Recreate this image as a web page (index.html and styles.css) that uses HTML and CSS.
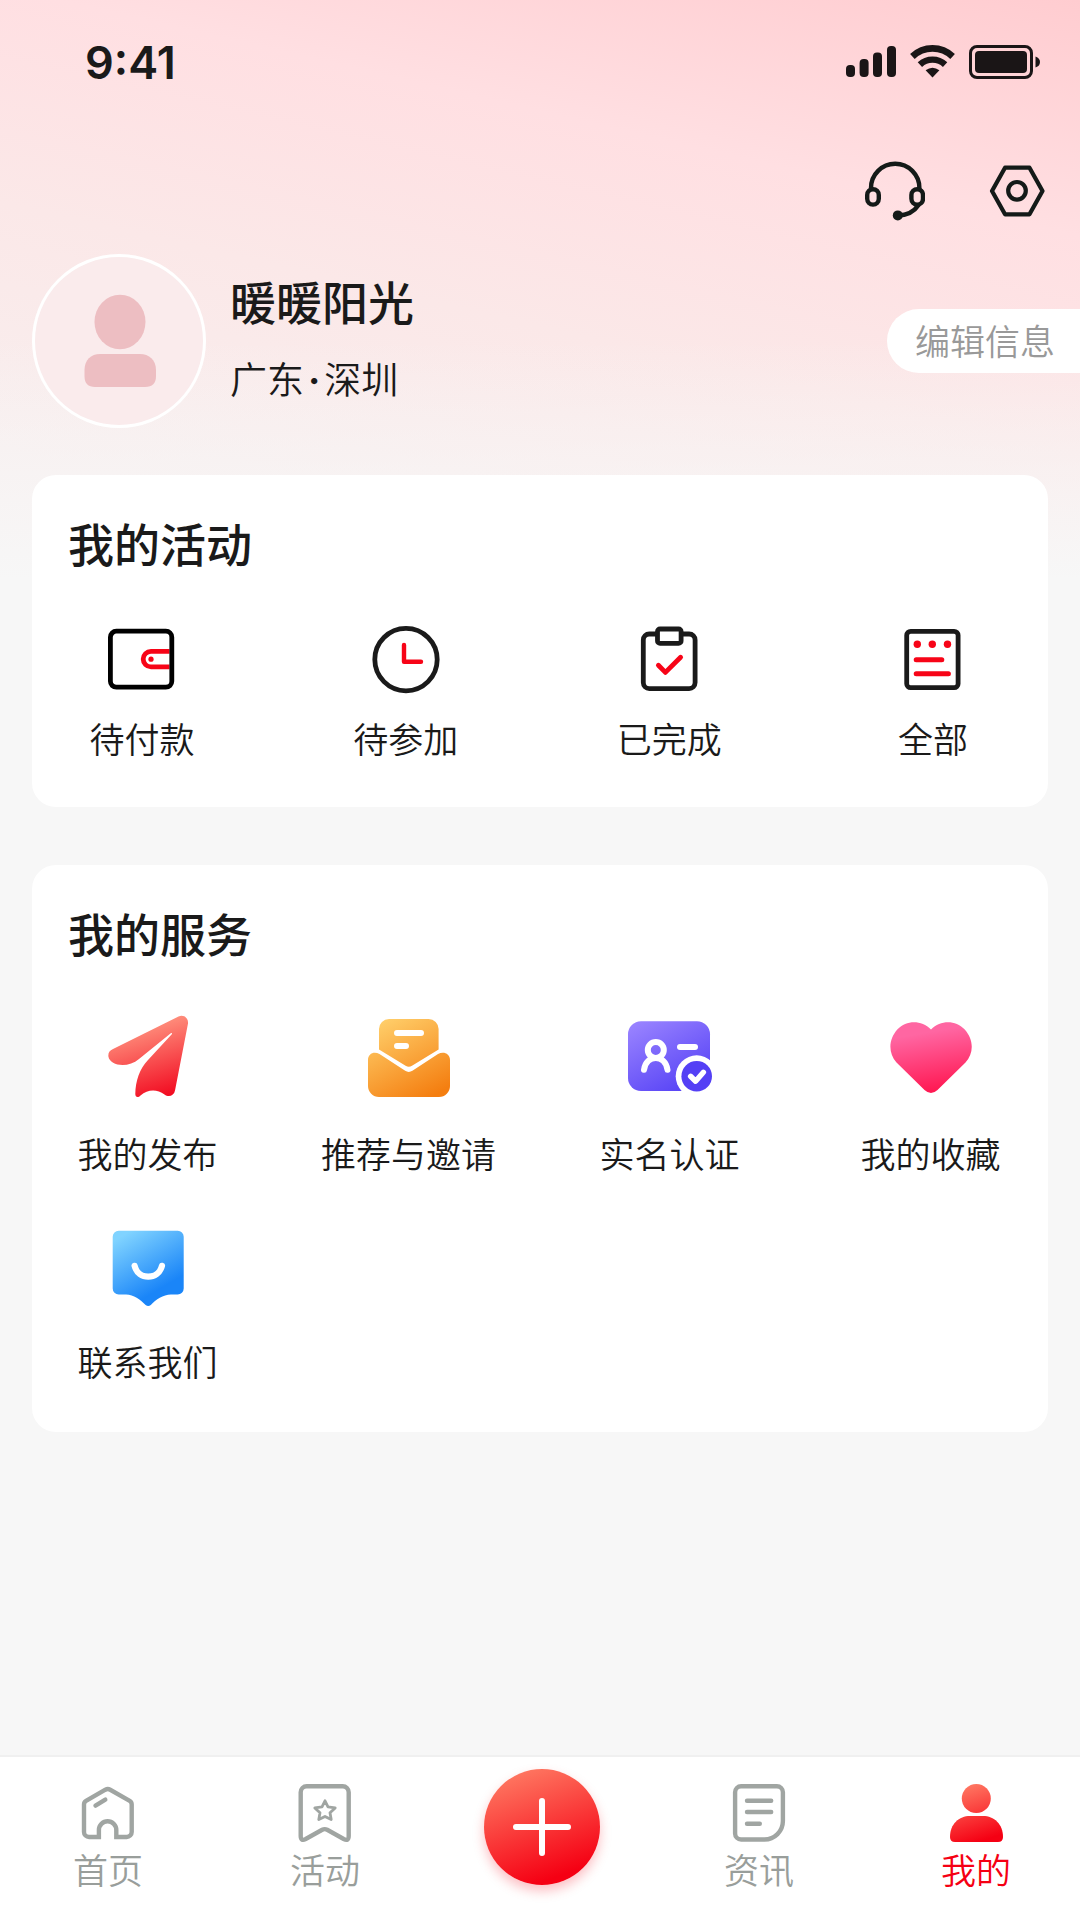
FILE: index.html
```html
<!DOCTYPE html>
<html lang="zh-CN">
<head>
<meta charset="UTF-8" />
<meta name="viewport" content="width=device-width, initial-scale=1" />
<title>我的</title>
<link rel="stylesheet" href="styles.css">
</head>
<body>
<header>
  <div class="status-bar">
    <span class="time">9:41</span>
    <div class="status-icons">
      <svg width="50" height="32" viewBox="0 0 50 32" fill="#1a1516">
        <rect x="0" y="19" width="9" height="12" rx="4"/>
        <rect x="13.6" y="13" width="9" height="18" rx="4"/>
        <rect x="27" y="6.6" width="9" height="24.4" rx="4"/>
        <rect x="41" y="0" width="9" height="31" rx="4"/>
      </svg>
      <svg width="45" height="34" viewBox="0 0 45 34">
        <path d="M2.4 11.5 A29 29 0 0 1 42.6 11.5" fill="none" stroke="#1a1516" stroke-width="6.6"/>
        <path d="M9.9 19.6 A18.5 18.5 0 0 1 35.1 19.6" fill="none" stroke="#1a1516" stroke-width="6.4"/>
        <path d="M15.6 25.3 Q22.5 20 29.4 25.3 L22.5 32.5Z" fill="#1a1516"/>
      </svg>
      <svg width="72" height="34" viewBox="0 0 72 34">
        <rect x="1.5" y="1.5" width="61" height="31" rx="6.5" fill="none" stroke="#1a1516" stroke-width="3"/>
        <rect x="6" y="6" width="52" height="22" rx="4" fill="#1a1516"/>
        <path d="M66.5 11.5 Q71 13 71 17 T66.5 22.5Z" fill="#1a1516"/>
      </svg>
    </div>
  </div>

  <div class="actions">
    <button type="button" aria-label="客服">
      <svg width="60" height="60" viewBox="0 0 60 60" fill="none" stroke="#141a18" stroke-width="4.4">
        <path d="M6 29 V27 a24.2 24.2 0 0 1 48.4 0 V29"/>
        <rect x="2.2" y="28.2" width="11.6" height="15.4" rx="5.8"/>
        <rect x="46.4" y="28.2" width="11.6" height="15.4" rx="5.8"/>
        <path d="M53.5 44 Q47 54 33 54.5"/>
        <circle cx="32.8" cy="54.4" r="5" fill="#141a18" stroke="none"/>
      </svg>
    </button>
    <button type="button" aria-label="设置">
      <svg width="60" height="60" viewBox="0 0 60 60" fill="none" stroke="#141a18" stroke-width="4.2" stroke-linejoin="round">
        <path d="M5 30 L18 6.7 H42.5 L55.5 30 L42.5 53.3 H18Z"/>
        <circle cx="30" cy="29.8" r="8.8"/>
      </svg>
    </button>
  </div>

  <div class="profile">
    <svg class="avatar" viewBox="0 0 168 168" role="img" aria-label="头像">
      <ellipse cx="85" cy="65" rx="25.5" ry="27.2" fill="#edbec2"/>
      <path d="M49.5 113 C49.5 103 56 97 65 97 H105 C114 97 121 103 121 113 V119 Q121 130 110 130 H60 Q49.5 130 49.5 119Z" fill="#edbec2"/>
    </svg>
    <div class="profile-info">
      <h1>暖暖阳光</h1>
      <p>广东<span class="dot">·</span>深圳</p>
    </div>
    <button type="button" class="edit-btn">编辑信息</button>
  </div>
</header>

<main>
  <section class="card">
    <h2>我的活动</h2>
    <div class="activities">
      <a href="#">
        <svg width="68" height="68" viewBox="0 0 68 68" fill="none">
          <path d="M61.5 25.3 H43 a7.8 7.8 0 0 0 0 15.6 H61.5" stroke="#f70417" stroke-width="4.8"/>
          <circle cx="43" cy="33.2" r="2.6" fill="#f70417"/>
          <rect x="2.4" y="5.2" width="61.4" height="56" rx="6" stroke="#000" stroke-width="4.8"/>
        </svg>
        <span>待付款</span>
      </a>
      <a href="#">
        <svg width="68" height="68" viewBox="0 0 68 68" fill="none">
          <circle cx="34" cy="33.6" r="31.2" stroke="#1a1a1a" stroke-width="4.8"/>
          <path d="M32 19 V35.7 H49" stroke="#f70417" stroke-width="4.4" stroke-linecap="round" stroke-linejoin="round"/>
        </svg>
        <span>待参加</span>
      </a>
      <a href="#">
        <svg width="68" height="68" viewBox="0 0 68 68" fill="none" stroke="#1a1a1a" stroke-width="4.8">
          <rect x="8.3" y="8" width="51.8" height="54.6" rx="6"/>
          <rect x="22.5" y="3" width="23.6" height="14.4" rx="2.5" fill="#fff"/>
          <path d="M23.4 39.3 L30.4 46.4 L45.6 31.2" stroke="#f70417" stroke-linecap="round" stroke-linejoin="round"/>
        </svg>
        <span>已完成</span>
      </a>
      <a href="#">
        <svg width="68" height="68" viewBox="0 0 68 68" fill="none">
          <rect x="7.7" y="5.3" width="51.4" height="56.4" rx="4" stroke="#1a1a1a" stroke-width="4.8"/>
          <g fill="#f70417">
            <circle cx="18.3" cy="18.3" r="3.7"/>
            <circle cx="33.3" cy="18.3" r="3.7"/>
            <circle cx="48.5" cy="18.3" r="3.7"/>
          </g>
          <path d="M17.2 33.7 H42.8 M17.2 47.7 H49.4" stroke="#f70417" stroke-width="5" stroke-linecap="round"/>
        </svg>
        <span>全部</span>
      </a>
    </div>
  </section>

  <section class="card">
    <h2>我的服务</h2>
    <div class="services">
      <a href="#">
        <svg width="84" height="84" viewBox="0 0 84 84">
          <defs>
            <linearGradient id="plane" x1="0.35" y1="0" x2="0.65" y2="1">
              <stop offset="0.1" stop-color="#ff9480"/>
              <stop offset="1" stop-color="#f20d22"/>
            </linearGradient>
          </defs>
          <path fill="url(#plane)" d="M72.5 2.4 C77.5 0 82.7 4 82 9.5 L69 76.5 C68 82 62.5 83.5 58.5 80.5 C51 75 42 75 34.5 81.5 C32 84 29.3 83.3 29.3 80 C29.5 67 33.5 55 42 46 L66 20 C66.2 19.2 65.5 18.8 64.8 19.3 L33 45 C22 54.5 4 52 2.4 42.5 C2 39 3.5 36.5 7 35Z"/>
        </svg>
        <span>我的发布</span>
      </a>
      <a href="#">
        <svg width="84" height="84" viewBox="0 0 84 84">
          <defs>
            <linearGradient id="mail" gradientUnits="userSpaceOnUse" x1="20" y1="5" x2="62" y2="84">
              <stop offset="0" stop-color="#ffcd68"/>
              <stop offset="1" stop-color="#f47e10"/>
            </linearGradient>
          </defs>
          <path fill="url(#mail)" d="M22 5 H61.6 a10 10 0 0 1 10 10 V35.5 L45 51.8 q-3.2 2 -6.4 0 L12 35.5 V15 a10 10 0 0 1 10 -10Z"/>
          <path fill="url(#mail)" d="M1 46 C1 39.5 7 37 12.5 40 L38.2 56.8 q3.6 2.2 7.2 0 L71 40 C76.5 37 83 39.5 83 46 V72 a11 11 0 0 1 -11 11 H12 a11 11 0 0 1 -11 -11Z"/>
          <path d="M30 19 H54 M30 32 H39" fill="none" stroke="#fff" stroke-width="6" stroke-linecap="round"/>
        </svg>
        <span>推荐与邀请</span>
      </a>
      <a href="#">
        <svg width="84" height="84" viewBox="0 0 84 84" fill="none" stroke-linecap="round" stroke-linejoin="round">
          <defs>
            <linearGradient id="idcard" x1="0.15" y1="0" x2="0.8" y2="1">
              <stop offset="0" stop-color="#9882ff"/>
              <stop offset="1" stop-color="#5440f5"/>
            </linearGradient>
          </defs>
          <rect x="0" y="7.3" width="82" height="69.7" rx="13" fill="url(#idcard)"/>
          <circle cx="27.8" cy="36" r="8" stroke="#fff" stroke-width="6"/>
          <path d="M16 55.8 C18 40 37.5 40 39.5 55.8" stroke="#fff" stroke-width="6"/>
          <path d="M52 33 H67" stroke="#fff" stroke-width="6"/>
          <circle cx="68.7" cy="62.3" r="21" fill="#fff"/>
          <circle cx="68.7" cy="62.3" r="15.3" fill="#5440f5"/>
          <path d="M62.6 62.3 L67.6 67.2 L75.4 58.3" stroke="#fff" stroke-width="5.4"/>
        </svg>
        <span>实名认证</span>
      </a>
      <a href="#">
        <svg width="84" height="84" viewBox="0 0 84 84">
          <defs>
            <linearGradient id="heart" x1="0.4" y1="0" x2="0.6" y2="1">
              <stop offset="0.15" stop-color="#ff66a2"/>
              <stop offset="1" stop-color="#ff154f"/>
            </linearGradient>
          </defs>
          <path fill="url(#heart)" d="M42 15.4 C32.5 5.8 17.5 5.8 8.5 15.2 C-.8 25.5 -.8 39.5 7.5 48.5 L35.5 76 q6.5 6 13 0 L76.5 48.5 C85 39.5 85 25.5 75.5 15.2 C66.5 5.8 51.5 5.8 42 15.4Z"/>
        </svg>
        <span>我的收藏</span>
      </a>
      <a href="#">
        <svg width="84" height="84" viewBox="0 0 84 84">
          <defs>
            <linearGradient id="contact" x1="0.15" y1="0" x2="0.65" y2="0.9">
              <stop offset="0.05" stop-color="#80d3ff"/>
              <stop offset="0.9" stop-color="#1a85f8"/>
            </linearGradient>
          </defs>
          <path fill="url(#contact)" d="M12.7 8.7 H71.7 a6 6 0 0 1 6 6 V66.5 a6 6 0 0 1 -6 6 H65 C57 72.7 50 77.5 44.8 83 q-2.6 2 -5.2 0 C34 77.5 28 72.7 20 72.5 H12.7 a6 6 0 0 1 -6 -6 V14.7 a6 6 0 0 1 6 -6Z"/>
          <path d="M28.6 43.8 C32 58.2 52.4 58.2 56 43.8" fill="none" stroke="#fff" stroke-width="6.2" stroke-linecap="round"/>
        </svg>
        <span>联系我们</span>
      </a>
    </div>
  </section>
</main>

<nav>
  <a href="#">
    <svg width="60" height="60" viewBox="0 0 60 60" fill="none" stroke="#a0a5a2" stroke-width="4.4">
      <path d="M20.9 53 H11 a5 5 0 0 1 -5 -5 V20.5 q0 -2.5 2 -3.7 L27.4 5.7 q2.4 -1.3 4.8 0 L51.7 16.8 q2 1.2 2 3.7 V48 a5 5 0 0 1 -5 5 H38.3 V46 a8.7 8.7 0 0 0 -17.4 0Z"/>
      <path d="M17.5 21.6 L27.3 15.6" stroke-linecap="round"/>
    </svg>
    <span>首页</span>
  </a>
  <a href="#">
    <svg width="60" height="60" viewBox="0 0 60 60" fill="none" stroke="#a0a5a2" stroke-width="4.4">
      <path d="M11.7 2.2 H47.7 a6 6 0 0 1 6 6 V52 q0 5.5 -5 3 L32.2 45.8 q-2.5 -1.3 -5 0 L10.7 55 q-5 2.5 -5 -3 V8.2 a6 6 0 0 1 6 -6Z"/>
      <path d="M30 16.8 L33 22.9 L40.2 23.9 L35 28.8 L36.2 35.6 L30 32.4 L23.8 35.6 L25 28.8 L19.8 23.9 L27 22.9Z" stroke-width="2.8" stroke-linejoin="round"/>
    </svg>
    <span>活动</span>
  </a>
  <button type="button" class="add-btn" aria-label="发布">
    <svg width="60" height="60" viewBox="0 0 60 60" fill="none" stroke="#fff" stroke-width="6" stroke-linecap="round">
      <path d="M4 30 H56 M30 4 V56"/>
    </svg>
  </button>
  <a href="#">
    <svg width="60" height="60" viewBox="0 0 60 60" fill="none" stroke="#a0a5a2" stroke-width="4.4" stroke-linecap="round">
      <path d="M12.1 2.2 H47.9 a6 6 0 0 1 6 6 V37 a18.5 18.5 0 0 1 -18.5 18.5 H12.1 a6 6 0 0 1 -6 -6 V8.2 a6 6 0 0 1 6 -6Z"/>
      <path d="M18 16.7 H42.2 M18 28 H42.2 M18 39.7 H30.8"/>
    </svg>
    <span>资讯</span>
  </a>
  <a href="#" class="active">
    <svg width="60" height="60" viewBox="0 0 60 60">
      <defs>
        <linearGradient id="mine" gradientUnits="userSpaceOnUse" x1="20" y1="0" x2="38" y2="56">
          <stop offset="0" stop-color="#ff7a64"/>
          <stop offset="1" stop-color="#f50013"/>
        </linearGradient>
      </defs>
      <circle cx="30.3" cy="14.5" r="14.5" fill="url(#mine)"/>
      <path fill="url(#mine)" d="M4 53 C4 40 13 32 24 32 H37 C48 32 57 40 57 53 q0 5 -5 5 H9 q-5 0 -5 -5Z"/>
    </svg>
    <span>我的</span>
  </a>
</nav>
</body>
</html>
```
FILE: styles.css
```css
* {
  box-sizing: border-box;
}
body {
  margin: 0;
  min-height: 100vh;
  display: flex;
  flex-direction: column;
  background-color: #f7f7f7;
  background-image:
    linear-gradient(180deg, rgba(247, 247, 247, 0) 340px, #f7f7f7 580px),
    linear-gradient(193deg, #ffccd0 0, #ffdfe2 230px, #fbe8e8 440px, #f8eeee 680px);
  background-size: 100% 580px;
  background-repeat: no-repeat;
  font-family: "Noto Sans CJK SC", sans-serif;
  color: #1a1a1a;
}
h1, h2, p {
  margin: 0;
}
a {
  color: inherit;
  text-decoration: none;
}
button {
  border: none;
  padding: 0;
  background: none;
  font-family: inherit;
  cursor: pointer;
}
svg {
  display: block;
  flex-shrink: 0;
}

/* Header */
.status-bar {
  height: 124px;
  padding: 0 39px 0 85px;
  display: flex;
  align-items: center;
  justify-content: space-between;
}
.time {
  font-family: Inter, sans-serif;
  font-size: 45px;
  font-weight: 600;
}
.status-icons {
  display: flex;
  align-items: center;
  gap: 14px;
}
.actions {
  display: flex;
  justify-content: flex-end;
  gap: 62px;
  padding: 37px 33px 33px;
}
.profile {
  display: flex;
  align-items: center;
  padding-left: 32px;
}
.avatar {
  width: 174px;
  height: 174px;
  border: 3px solid #fff;
  border-radius: 50%;
  background: #faebec;
}
.profile-info {
  display: flex;
  flex-direction: column;
  gap: 23px;
  margin: 0 0 6px 24px;
}
h1, h2 {
  font-size: 46px;
  font-weight: 500;
  line-height: 60px;
}
.profile-info p {
  font-size: 37px;
  font-weight: 350;
  line-height: 50px;
}
.dot {
  margin: 0 4px;
  font-family: Inter, sans-serif;
  font-weight: 700;
}
.edit-btn {
  margin-left: auto;
  height: 64px;
  padding: 0 25px 4px 28px;
  border-radius: 32px 0 0 32px;
  background: #fff;
  color: #999;
  font-size: 35px;
  font-weight: 350;
}

/* Cards */
main {
  flex-grow: 1;
  display: flex;
  flex-direction: column;
  gap: 58px;
  padding: 47px 32px;
}
.card {
  background: #fff;
  border-radius: 24px;
  padding: 37px 28px 41px;
}
.card h2 {
  padding-left: 8px;
}
.activities, .services {
  display: grid;
  justify-content: space-between;
}
.activities {
  grid-template-columns: repeat(4, 164px);
  padding: 54px 5px 3px 0;
}
.services {
  grid-template-columns: repeat(4, 175px);
  row-gap: 44px;
  padding: 52px 2px 5px 0;
}
.activities a, .services a {
  display: flex;
  flex-direction: column;
  align-items: center;
  gap: 19px;
  font-size: 35px;
  font-weight: 350;
  line-height: 50px;
  white-space: nowrap;
}
.services a {
  gap: 30px;
}

/* Bottom nav */
nav {
  position: sticky;
  bottom: 0;
  display: flex;
  justify-content: space-between;
  align-items: flex-start;
  padding: 0 38px 26px 42px;
  background: #fff;
  border-top: 2px solid #f0f0f0;
}
nav a {
  width: 132px;
  padding-top: 27px;
  display: flex;
  flex-direction: column;
  align-items: center;
  color: #999e9b;
  font-size: 35px;
  font-weight: 350;
  line-height: 50px;
}
nav .active {
  color: #f50013;
}
.add-btn {
  width: 116px;
  height: 116px;
  margin: 12px 8px 0;
  display: flex;
  align-items: center;
  justify-content: center;
  border-radius: 50%;
  background: linear-gradient(160deg, #ff7d65 5%, #f50013 85%);
  box-shadow: 0 6px 12px rgba(245, 0, 19, 0.25);
}
```
